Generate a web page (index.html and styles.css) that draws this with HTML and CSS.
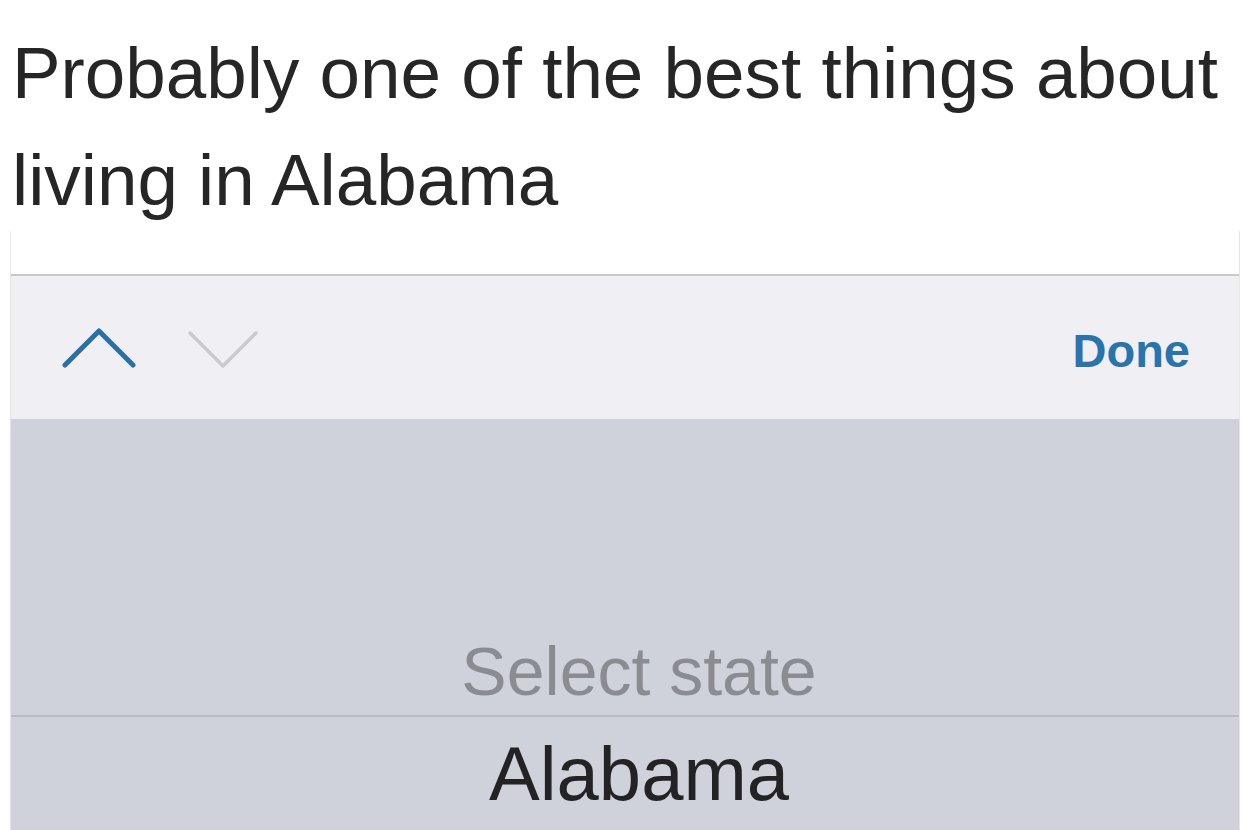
FILE: index.html
```html
<!DOCTYPE html>
<html lang="en">
<head>
<meta charset="utf-8">
<title>Alabama</title>
<link rel="stylesheet" href="styles.css">
</head>
<body>
<div class="caption">Probably one of the best things about<br>living in Alabama</div>
<div class="panel">
  <div class="strip"></div>
  <div class="toolbar">
    <div class="arrows">
      <svg class="chev up" width="74" height="42" viewBox="0 0 74 42"><polyline points="3,38 37,4 71,38" fill="none" stroke="#2b6fa3" stroke-width="5" stroke-linecap="round" stroke-linejoin="round"/></svg>
      <svg class="chev down" width="72" height="40" viewBox="0 0 72 40"><polyline points="3,3 36,36 69,3" fill="none" stroke="#cacace" stroke-width="3.5" stroke-linecap="round" stroke-linejoin="round"/></svg>
    </div>
    <div class="done">Done</div>
  </div>
  <div class="picker">
    <div class="row placeholder">Select state</div>
    <div class="row selected">Alabama</div>
  </div>
</div>
</body>
</html>
```
FILE: styles.css
```css
html, body {
  margin: 0;
  padding: 0;
  background: #ffffff;
  overflow: hidden;
}
body {
  width: 1250px;
  height: 830px;
  font-family: "Liberation Sans", Arial, sans-serif;
}
.caption {
  padding: 19px 0 0 12px;
  font-size: 72.8px;
  line-height: 107px;
  color: #262626;
  height: 212px;
  white-space: nowrap;
}
.panel {
  margin: 0 10px;
  border-left: 1px solid #e6e6e8;
  border-right: 1px solid #e6e6e8;
  display: flex;
  flex-direction: column;
}
.strip {
  height: 43px;
  background: #ffffff;
  border-bottom: 2px solid #c8c8cc;
}
.toolbar {
  height: 143px;
  background: #efeff4;
  display: flex;
  align-items: center;
  justify-content: space-between;
  padding: 0 49px 0 51px;
}
.arrows {
  display: flex;
  align-items: center;
  gap: 51px;
  padding-top: 4px;
}
.chev.up {
  margin-top: -4px;
}
.done {
  font-weight: bold;
  font-size: 47px;
  color: #2b74ab;
  padding-top: 5px;
}
.picker {
  height: 412px;
  background: #d0d2db;
  display: flex;
  flex-direction: column;
  justify-content: flex-end;
}
.row {
  text-align: center;
  white-space: nowrap;
  padding-left: 28px;
}
.placeholder {
  font-size: 68px;
  line-height: 88px;
  color: #8b8b92;
  border-bottom: 2px solid #b9bac3;
}
.selected {
  font-size: 76px;
  line-height: 114px;
  color: #232326;
}
```
